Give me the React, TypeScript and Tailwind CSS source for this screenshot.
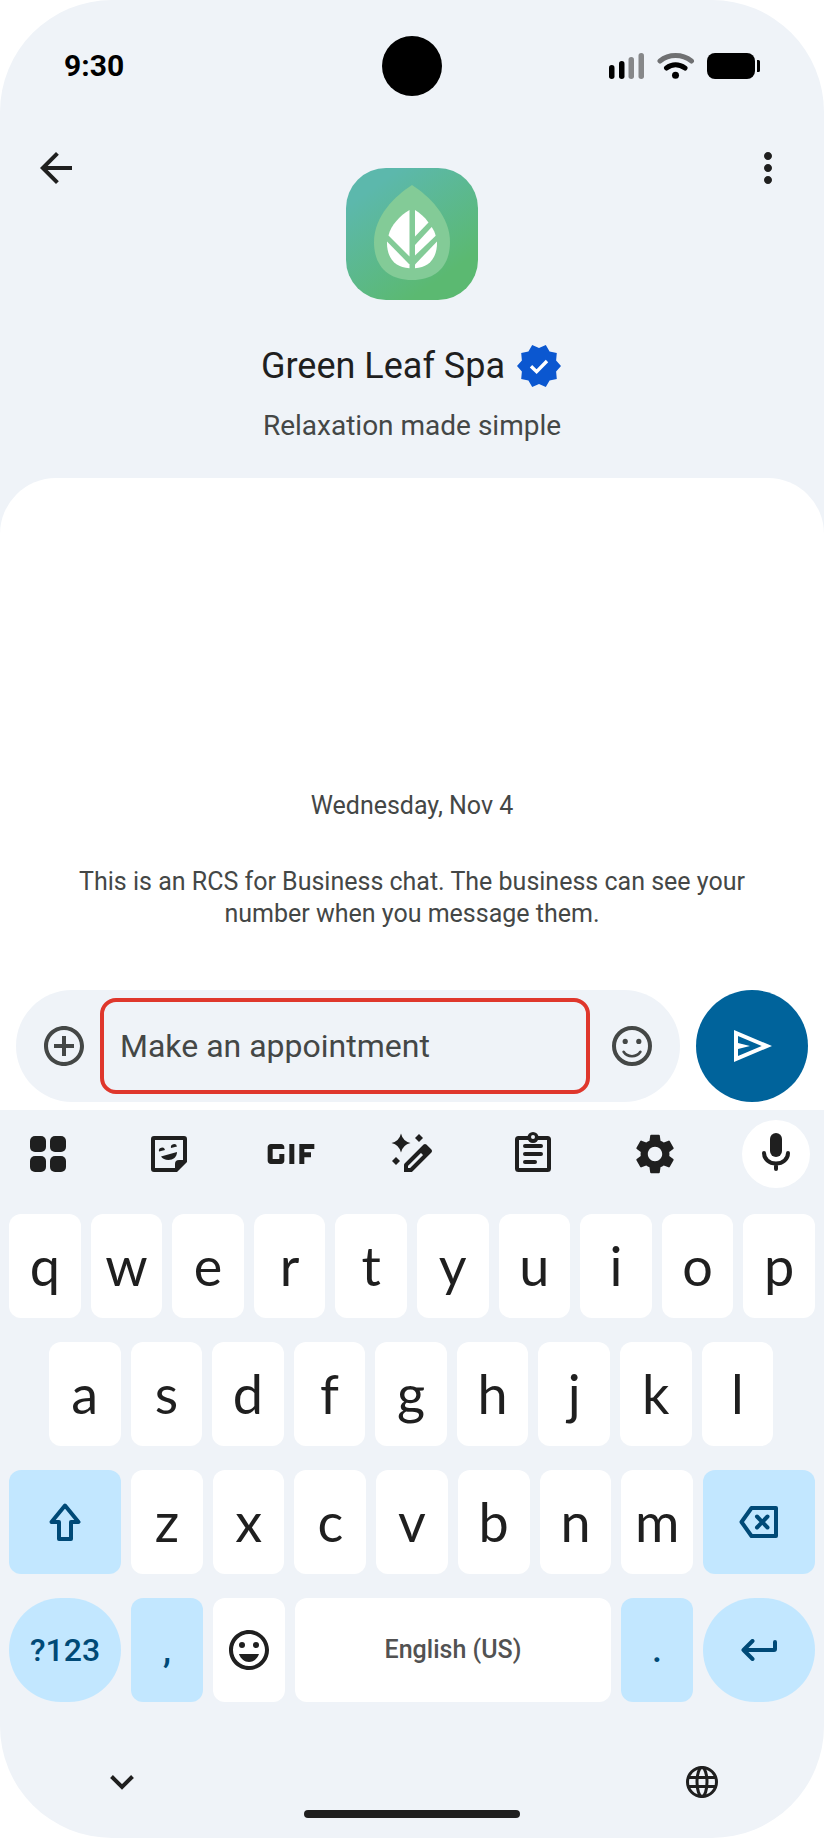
import React from 'react';
import {
  MdAddCircleOutline,
  MdArrowBack,
  MdGif,
  MdMoreVert,
  MdOutlineEmojiEmotions,
  MdSettings,
} from 'react-icons/md';

const topRow = ['q', 'w', 'e', 'r', 't', 'y', 'u', 'i', 'o', 'p'];
const homeRow = ['a', 's', 'd', 'f', 'g', 'h', 'j', 'k', 'l'];
const bottomRow = ['z', 'x', 'c', 'v', 'b', 'n', 'm'];

const SignalIcon = () => (
  <svg width="36" height="26" viewBox="0 0 36 26">
    <rect x="0" y="12" width="5.500" height="14" rx="2.700" />
    <rect x="10" y="8" width="5.500" height="18" rx="2.700" />
    <rect x="19.500" y="4" width="5.500" height="22" rx="2.700" fill="#868789" />
    <rect x="29.500" y="0" width="5.500" height="26" rx="2.700" fill="#868789" />
  </svg>
);

const WifiIcon = () => (
  <svg width="38" height="26" viewBox="0 0 38 26" fill="none" strokeWidth="5" strokeLinecap="round">
    <path d="M3 8C12 .8 25 .8 34.500 8" stroke="#6f7072" />
    <path d="M9.500 15C15 10.800 22 10.800 28 15" stroke="#000" />
    <circle cx="18.500" cy="22.300" r="3.500" fill="#000" />
  </svg>
);

const BatteryIcon = () => (
  <svg width="53" height="26" viewBox="0 0 53 26">
    <rect width="48" height="26" rx="8" />
    <path d="M50 7h1.500a1.500 1.500 0 0 1 1.500 1.500v9a1.500 1.500 0 0 1-1.500 1.500H50z" />
  </svg>
);

const LeafLogo = () => (
  <svg className="h-33 w-33 shrink-0" viewBox="0 0 132 132" role="img" aria-label="Green Leaf Spa logo">
    <defs>
      <linearGradient id="leafBg" x1="0.2" y1="0.15" x2="0.7" y2="0.85">
        <stop offset="0" stopColor="#5cb8ac" />
        <stop offset="1" stopColor="#5bb971" />
      </linearGradient>
    </defs>
    <rect width="132" height="132" rx="40" fill="url(#leafBg)" />
    <path d="M66 17C49 28 28 48 28 74c0 24 14 38 38 38s38-14 38-38C104 48 83 28 66 17z" fill="#83cb97" />
    <g fill="#fff">
      <path d="M63.500 42v46.500L42.500 67.500C45 57 54 47.500 63.500 42z" />
      <path d="M69 42c5 3 10 7.500 13.500 12.500L69 68.500z" />
      <path d="M85.700 59c2 3 3.200 5.700 4 8.700L69 87.500V77z" />
      <path d="M41 73.500l22.500 23v3.700C49 99.500 40.500 90 41 73.500z" />
      <path d="M91 73.500L69 96.500v3.700C83 99.500 91.500 90 91 73.500z" />
    </g>
  </svg>
);

const VerifiedBadge = () => (
  <svg className="h-12 w-12" viewBox="0 0 24 24" role="img" aria-label="Verified">
    <path
      fill="#0b57d0"
      d="M23 12l-2.440-2.790.34-3.690-3.610-.82-1.890-3.200L12 2.960 8.600 1.500 6.710 4.690 3.100 5.500l.34 3.700L1 12l2.440 2.790-.34 3.700 3.610.82L8.600 22.500l3.400-1.470 3.400 1.460 1.890-3.190 3.610-.82-.34-3.690z"
    />
    <path d="M8 12.100l2.800 2.700 5.200-5.300" fill="none" stroke="#fff" strokeWidth="1.700" />
  </svg>
);

const SmileIcon = () => (
  <svg className="h-12 w-12" viewBox="0 0 24 24" fill="none" stroke="currentColor">
    <circle cx="12" cy="12" r="9" strokeWidth="2" />
    <circle cx="8.600" cy="9.700" r="1.300" fill="currentColor" stroke="none" />
    <circle cx="15.400" cy="9.700" r="1.300" fill="currentColor" stroke="none" />
    <path d="M7.800 14.900c.9 1.400 2.400 2.200 4.200 2.200s3.300-.8 4.200-2.200" strokeWidth="1.300" strokeLinecap="round" />
  </svg>
);

const SendIcon = () => (
  <svg className="h-12 w-12" viewBox="0 0 24 24" fill="#fff">
    <path d="M3 20V4l19 8zm2-3l11.850-5L5 7v3.500l6 1.500-6 1.500z" />
  </svg>
);

const AppsIcon = () => (
  <svg width="36" height="36" viewBox="0 0 36 36" fill="currentColor">
    <rect width="16" height="16" rx="5" />
    <rect x="20" width="16" height="16" rx="5" />
    <rect y="20" width="16" height="16" rx="5" />
    <rect x="20" y="20" width="16" height="16" rx="5" />
  </svg>
);

const StickerIcon = () => (
  <svg width="36" height="36" viewBox="0 0 36 36" fill="currentColor">
    <path
      d="M25.200 34H3a1 1 0 0 1-1-1V3a1 1 0 0 1 1-1h30a1 1 0 0 1 1 1v22.200z"
      fill="none"
      stroke="currentColor"
      strokeWidth="4"
    />
    <path d="M24 35v-7a4 4 0 0 1 4-4h7z" />
    <path d="M8 15.500a3 3 0 0 1 6-1.500z" />
    <path d="M20 12a3 3 0 0 1 6-1.500z" />
    <path d="M10 20.500L26 16c0 5-4 8-8.500 8-3.500 0-6-1.300-7.500-3.500z" />
  </svg>
);

const MagicPenIcon = () => (
  <svg width="48" height="48" viewBox="0 0 48 48" fill="currentColor">
    <path d="M13 3.500q1.800 7.700 9.500 9.500-7.700 1.800-9.500 9.500Q11.200 14.800 3.500 13 11.200 11.200 13 3.500z" />
    <path d="M8 27l4 4-4 4-4-4z" />
    <path d="M31 4l4 4-4 4-4-4z" />
    <path
      d="M18 40v-5l19-19 5 5-19 19z"
      fill="none"
      stroke="currentColor"
      strokeWidth="4"
      strokeLinejoin="round"
    />
    <path d="M31 21l6-6 6 6-6 6z" />
    <path d="M16 38v4h4z" />
  </svg>
);

const ClipboardIcon = () => (
  <svg className="-mt-1" width="36" height="40" viewBox="0 0 36 40" fill="none" stroke="currentColor" strokeWidth="4">
    <rect x="2" y="6" width="32" height="32" rx="1.500" />
    <circle cx="18" cy="5.500" r="5.500" fill="currentColor" stroke="none" />
    <circle cx="18" cy="5" r="2" fill="#eff3f8" stroke="none" />
    <path d="M10 14h16M10 22h16M10 30h10" strokeLinecap="round" />
  </svg>
);

const MicIcon = () => (
  <svg className="-mt-1" width="28" height="38" viewBox="0 0 28 38" fill="none" stroke="currentColor" strokeWidth="4" strokeLinecap="round">
    <rect x="8" width="12" height="24" rx="6" fill="currentColor" stroke="none" />
    <path d="M2 20c0 6 5 10.500 12 10.500S26 26 26 20M14 31v5" />
  </svg>
);

const ShiftIcon = () => (
  <svg width="32" height="38" viewBox="0 0 32 38" fill="none" stroke="currentColor" strokeWidth="4" strokeLinejoin="round">
    <path d="M16 2.500L29.500 19H22v17H10V19H2.500z" />
  </svg>
);

const BackspaceIcon = () => (
  <svg width="40" height="32" viewBox="0 0 40 32" fill="none" stroke="currentColor" strokeWidth="4" strokeLinejoin="round" strokeLinecap="round">
    <path d="M12.500 2H37v28H12.500L2.500 16z" />
    <path d="M18 10.500L28.500 21.500M28.500 10.500L18 21.500" />
  </svg>
);

const EnterIcon = () => (
  <svg width="36" height="22" viewBox="0 0 36 22" fill="none" stroke="currentColor" strokeWidth="4" strokeLinejoin="round" strokeLinecap="round">
    <path d="M34 3v7a1 1 0 0 1-1 1H2.500M11.500 2l-9 9 9 9" />
  </svg>
);

const ChevronIcon = () => (
  <svg width="24" height="15" viewBox="0 0 24 15" fill="none" stroke="currentColor" strokeWidth="4">
    <path d="M1.500 1.500L12 12 22.500 1.500" />
  </svg>
);

const GlobeIcon = () => (
  <svg width="32" height="32" viewBox="0 0 32 32" fill="none" stroke="currentColor" strokeWidth="3">
    <circle cx="16" cy="16" r="14.500" />
    <ellipse cx="16" cy="16" rx="5" ry="14.500" />
    <path d="M2 11.500h28M2 20.500h28" />
  </svg>
);

const toolbar = [
  { name: 'Apps', icon: <AppsIcon /> },
  { name: 'Stickers', icon: <StickerIcon /> },
  { name: 'GIF', icon: <MdGif className="h-20 w-20 shrink-0" /> },
  { name: 'Proofread', icon: <MagicPenIcon /> },
  { name: 'Clipboard', icon: <ClipboardIcon /> },
  { name: 'Settings', icon: <MdSettings className="h-12 w-12" /> },
];

const LetterKey: React.FC<{ letter: string }> = ({ letter }) => (
  <button className="flex h-26 min-w-0 flex-1 items-center justify-center rounded-xl bg-white font-['Lato',sans-serif] text-[54px] leading-none">
    {letter}
  </button>
);

const App: React.FC = () => {
  return (
    <div className="min-h-screen bg-white">
      <div className="flex min-h-screen flex-col overflow-hidden rounded-[112px] bg-[#eff3f8] font-['Roboto',sans-serif] text-[#1f1f1f]">
        {/* Status bar */}
        <div className="grid h-33 grid-cols-3 items-center px-16 text-black">
          <span className="text-[30px] leading-9 font-bold">9:30</span>
          <div className="h-15 w-15 justify-self-center rounded-full bg-black" />
          <div className="flex items-center gap-3 justify-self-end">
            <SignalIcon />
            <WifiIcon />
            <BatteryIcon />
          </div>
        </div>

        {/* Business header */}
        <header className="pb-8">
          <div className="flex items-start justify-between px-8 pt-3">
            <button aria-label="Back">
              <MdArrowBack className="h-12 w-12" />
            </button>
            <div className="pt-6">
              <LeafLogo />
            </div>
            <button aria-label="More options">
              <MdMoreVert className="h-12 w-12" />
            </button>
          </div>
          <div className="mt-[42px] flex items-center justify-center gap-[10px]">
            <h1 className="text-[36px] leading-12">Green Leaf Spa</h1>
            <VerifiedBadge />
          </div>
          <p className="mt-4 text-center text-[28px] leading-10 text-[#444746]">Relaxation made simple</p>
        </header>

        {/* Conversation */}
        <main className="flex flex-1 flex-col justify-end rounded-t-[56px] bg-white px-4 pb-2">
          <div className="space-y-11 pb-15 text-center text-[25px] leading-8 text-[#444746]">
            <p>Wednesday, Nov 4</p>
            <p className="px-12">
              This is an RCS for Business chat. The business can see your number when you message them.
            </p>
          </div>
          <form className="flex gap-4" onSubmit={(e) => e.preventDefault()}>
            <div className="flex h-28 min-w-0 flex-1 items-center rounded-full bg-[#eff3f8] px-6 text-[#444746]">
              <button type="button" aria-label="Add attachment">
                <MdAddCircleOutline className="h-12 w-12" />
              </button>
              <input
                type="text"
                aria-label="Message"
                defaultValue="Make an appointment"
                className="mr-[18px] ml-3 h-24 min-w-0 flex-1 rounded-2xl border-4 border-[#df372c] px-4 text-[32px] outline-none"
              />
              <button type="button" aria-label="Emoji">
                <SmileIcon />
              </button>
            </div>
            <button aria-label="Send" className="flex h-28 w-28 items-center justify-center rounded-full bg-[#00639b]">
              <SendIcon />
            </button>
          </form>
        </main>

        {/* Keyboard */}
        <section>
          <div className="flex items-center justify-between px-[14px] pt-[10px]">
            {toolbar.map((tool) => (
              <button key={tool.name} aria-label={tool.name} className="flex h-17 w-17 items-center justify-center">
                {tool.icon}
              </button>
            ))}
            <button aria-label="Voice typing" className="flex h-17 w-17 items-center justify-center rounded-full bg-white">
              <MicIcon />
            </button>
          </div>

          <div className="mt-[26px] space-y-6 px-[9px]">
            <div className="flex gap-[10px]">
              {topRow.map((letter) => (
                <LetterKey key={letter} letter={letter} />
              ))}
            </div>
            <div className="flex gap-[10px] pr-[42px] pl-[40px]">
              {homeRow.map((letter) => (
                <LetterKey key={letter} letter={letter} />
              ))}
            </div>
            <div className="flex gap-[10px]">
              <button aria-label="Shift" className="flex h-26 w-28 items-center justify-center rounded-xl bg-[#c2e7ff] text-[#004a77]">
                <ShiftIcon />
              </button>
              {bottomRow.map((letter) => (
                <LetterKey key={letter} letter={letter} />
              ))}
              <button aria-label="Backspace" className="flex h-26 w-28 items-center justify-center rounded-xl bg-[#c2e7ff] text-[#004a77]">
                <BackspaceIcon />
              </button>
            </div>
            <div className="flex gap-[10px] text-[#004a77]">
              <button className="h-26 w-28 rounded-full bg-[#c2e7ff] text-[32px] font-medium">?123</button>
              <button className="h-26 w-18 rounded-xl bg-[#c2e7ff] text-[36px] font-medium">,</button>
              <button aria-label="Emoji keyboard" className="flex h-26 w-18 items-center justify-center rounded-xl bg-white text-[#1f1f1f]">
                <MdOutlineEmojiEmotions className="h-12 w-12" />
              </button>
              <button className="h-26 min-w-0 flex-1 rounded-xl bg-white text-[25px] font-medium text-[#525252]">
                English (US)
              </button>
              <button className="h-26 w-18 rounded-xl bg-[#c2e7ff] text-[36px] font-medium">.</button>
              <button aria-label="Enter" className="flex h-26 w-28 items-center justify-center rounded-full bg-[#c2e7ff] text-[#004a77]">
                <EnterIcon />
              </button>
            </div>
          </div>

          <div className="mt-16 flex h-8 items-center justify-between pr-[106px] pl-[110px]">
            <button aria-label="Hide keyboard">
              <ChevronIcon />
            </button>
            <button aria-label="Switch language">
              <GlobeIcon />
            </button>
          </div>
          <div className="mx-auto mt-3 mb-5 h-2 w-54 rounded-full bg-[#1f1f1f]" />
        </section>
      </div>
    </div>
  );
};

export default App;
